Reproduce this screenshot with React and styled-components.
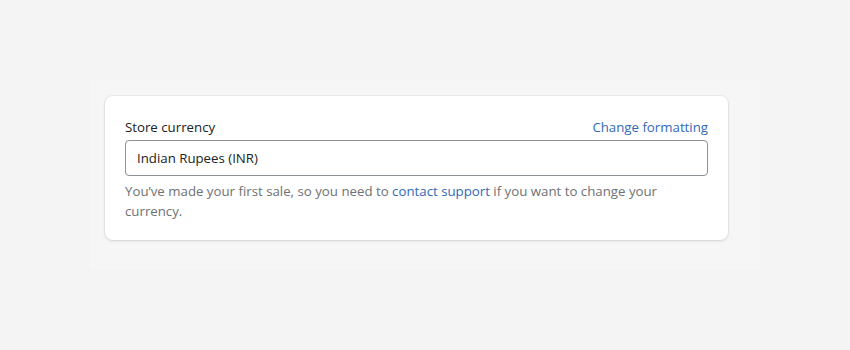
import React from "react";
import styled, { createGlobalStyle } from "styled-components";

const GlobalStyle = createGlobalStyle`
  html, body {
    margin: 0;
    background: #f4f4f5;
    font-family: "Open Sans", "Noto Sans", sans-serif;
  }
`;

export default () => (
  <>
    <GlobalStyle />
    <Page>
      <Panel>
        <Card>
          <LabelRow>
            <Label htmlFor="currency">Store currency</Label>
            <Action href="#">Change formatting</Action>
          </LabelRow>
          <Field id="currency">Indian Rupees (INR)</Field>
          <Help>
            You’ve made your first sale, so you need to{" "}
            <Action href="#">contact support</Action> if you want to change your
            currency.
          </Help>
        </Card>
      </Panel>
    </Page>
  </>
);

const Page = styled.div`
  width: 850px;
  height: 350px;
  padding: 80px 90px;
  box-sizing: border-box;
`;

const Panel = styled.div`
  width: 670px;
  height: 190px;
  box-sizing: border-box;
  padding: 16px 32px 30px 15px;
  background: #f6f6f7;
`;

const Card = styled.div`
  background: #fff;
  border-radius: 8px;
  box-shadow: 0 0 0 1px rgba(63, 63, 68, 0.05), 0 1px 3px 0 rgba(63, 63, 68, 0.15);
  padding: 21px 20px 19px 20px;
  font-size: 13.25px;
  line-height: 20px;
  color: #202223;
`;

const LabelRow = styled.div`
  display: flex;
  justify-content: space-between;
  align-items: center;
  margin-bottom: 3px;
`;

const Label = styled.label`
  color: #202223;
`;

const Action = styled.a`
  color: #3169b8;
  text-decoration: none;
`;

const Field = styled.div`
  height: 36px;
  box-sizing: border-box;
  border: 1px solid #8c9196;
  border-radius: 4px;
  padding: 0 11px;
  display: flex;
  align-items: center;
  color: #202223;
`;

const Help = styled.p`
  margin: 5px 0 0;
  color: #6d7175;
`;
